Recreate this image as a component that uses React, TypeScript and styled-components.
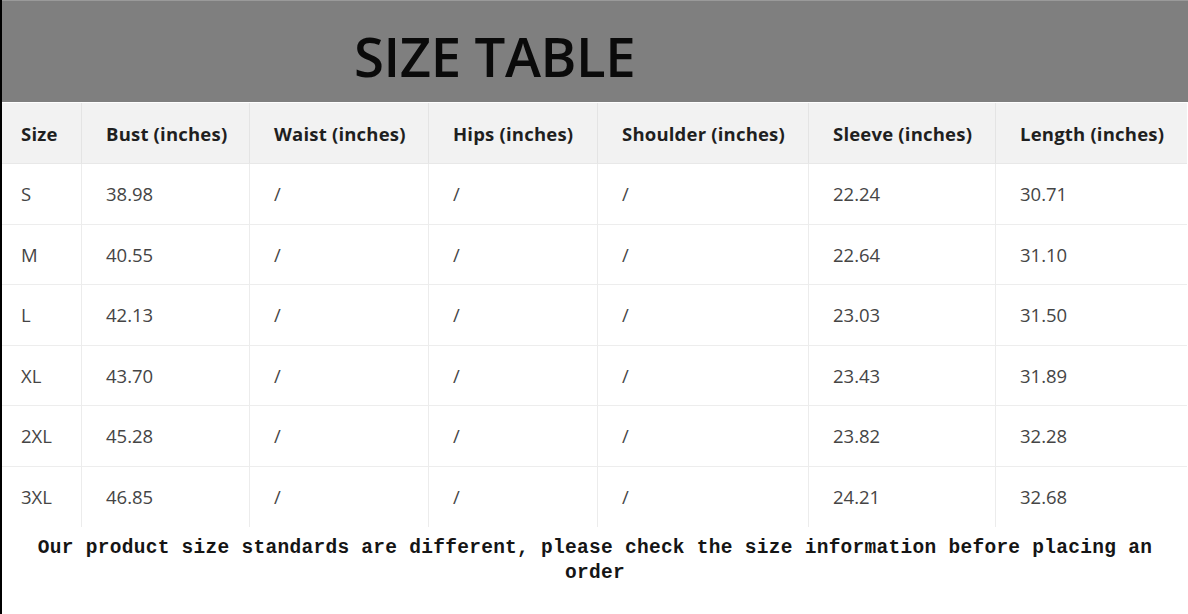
import styled, { createGlobalStyle } from "styled-components"

const GlobalStyle = createGlobalStyle`
  html, body {
    margin: 0;
    padding: 0;
    background: #ffffff;
  }
`

const Page = styled.div`
  width: 1186px;
  height: 614px;
  border-left: 2px solid #000;
  background: #fff;
  overflow: hidden;
`

const Banner = styled.div`
  height: 102px;
  background: #7f7f7f;
  border-top: 1px solid #9a9a9a;
  box-sizing: border-box;
  display: flex;
  align-items: center;
  padding-left: 352px;
`

const Title = styled.h1`
  margin: 0;
  font-family: "Open Sans", "Liberation Sans", sans-serif;
  font-weight: 600;
  font-size: 54.5px;
  letter-spacing: -0.4px;
  color: #0a0a0a;
  line-height: 1;
  padding-top: 9px;
`

const Table = styled.table`
  width: 1185px;
  margin-top: 1px;
  border-collapse: separate;
  border-spacing: 0;
  table-layout: fixed;
  border-bottom-right-radius: 12px;
  overflow: hidden;
  font-family: "Open Sans", "Liberation Sans", sans-serif;
`

const HeadCell = styled.th<{ $first?: boolean }>`
  height: 60px;
  background: #f2f2f2;
  color: #1f1f1f;
  font-size: 18.5px;
  letter-spacing: 0.2px;
  font-weight: 700;
  text-align: left;
  padding: 0 0 0 ${(p) => (p.$first ? "19px" : "24px")};
  border-right: 1px solid #e4e4e4;
  border-bottom: 1px solid #e8e8e8;
  white-space: nowrap;
  &:last-child {
    border-right: none;
  }
`

const Cell = styled.td<{ $first?: boolean }>`
  height: 60.5px;
  box-sizing: border-box;
  color: #454545;
  font-size: 18.5px;
  font-weight: 400;
  padding: 0 0 0 ${(p) => (p.$first ? "19px" : "24px")};
  border-right: 1px solid #ececec;
  border-bottom: 1px solid #ededed;
  &:last-child {
    border-right: none;
  }
  tr:last-child & {
    border-bottom: none;
  }
`

const Note = styled.p`
  margin: 9px 0 0;
  padding: 0 10px;
  text-align: center;
  font-family: "Liberation Mono", "DejaVu Sans Mono", monospace;
  font-weight: 700;
  font-size: 19.5px;
  letter-spacing: 0.28px;
  line-height: 25px;
  color: #151515;
`

const columns = [
  { label: "Size", width: 80 },
  { label: "Bust (inches)", width: 168 },
  { label: "Waist (inches)", width: 179 },
  { label: "Hips (inches)", width: 169 },
  { label: "Shoulder (inches)", width: 211 },
  { label: "Sleeve (inches)", width: 187 },
  { label: "Length (inches)", width: 191 },
]

const rows = [
  ["S", "38.98", "/", "/", "/", "22.24", "30.71"],
  ["M", "40.55", "/", "/", "/", "22.64", "31.10"],
  ["L", "42.13", "/", "/", "/", "23.03", "31.50"],
  ["XL", "43.70", "/", "/", "/", "23.43", "31.89"],
  ["2XL", "45.28", "/", "/", "/", "23.82", "32.28"],
  ["3XL", "46.85", "/", "/", "/", "24.21", "32.68"],
]

export default function App() {
  return (
    <>
      <GlobalStyle />
      <Page>
        <Banner>
          <Title>SIZE TABLE</Title>
        </Banner>
        <Table>
          <colgroup>
            {columns.map((c) => (
              <col key={c.label} style={{ width: c.width }} />
            ))}
          </colgroup>
          <thead>
            <tr>
              {columns.map((c, i) => (
                <HeadCell key={c.label} $first={i === 0}>
                  {c.label}
                </HeadCell>
              ))}
            </tr>
          </thead>
          <tbody>
            {rows.map((row) => (
              <tr key={row[0]}>
                {row.map((value, i) => (
                  <Cell key={i} $first={i === 0}>
                    {value}
                  </Cell>
                ))}
              </tr>
            ))}
          </tbody>
        </Table>
        <Note>
          Our product size standards are different, please check the size
          information before placing an order
        </Note>
      </Page>
    </>
  )
}
